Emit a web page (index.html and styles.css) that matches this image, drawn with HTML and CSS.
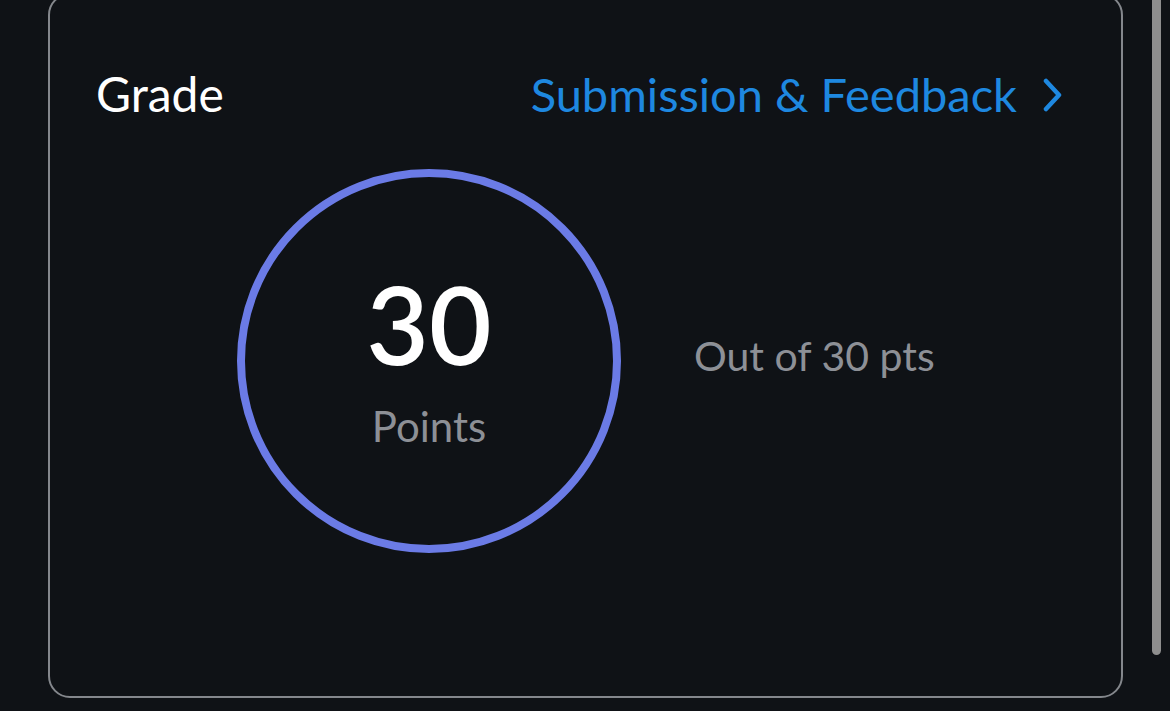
FILE: index.html
```html
<!DOCTYPE html>
<html lang="en">
<head>
<meta charset="utf-8">
<title>Grade</title>
<link rel="stylesheet" href="styles.css">
</head>
<body>
<div class="page">
  <section class="card">
    <header class="card-header">
      <h2 class="title">Grade</h2>
      <a class="link" href="#">Submission &amp; Feedback
        <svg class="chev" width="20" height="34" viewBox="0 0 20 34" aria-hidden="true"><path d="M3 3 L16 17 L3 31" fill="none" stroke="currentColor" stroke-width="4.5" stroke-linecap="round" stroke-linejoin="round"/></svg>
      </a>
    </header>
    <div class="grade-body">
      <div class="ring">
        <div class="score">30</div>
        <div class="unit">Points</div>
      </div>
      <div class="out-of">Out of 30 pts</div>
    </div>
  </section>
  <div class="scrollbar"></div>
</div>
</body>
</html>
```
FILE: styles.css
```css
html, body {
  margin: 0;
  padding: 0;
  background: #0f1216;
  height: 100%;
  overflow: hidden;
}
body {
  font-family: Lato, "Open Sans", sans-serif;
  color: #ffffff;
}
.page {
  position: relative;
  height: 711px;
}
.card {
  position: relative;
  box-sizing: border-box;
  margin-left: 48px;
  margin-top: -7px;
  width: 1075px;
  height: 705px;
  border: 2px solid #84878c;
  border-radius: 22px;
  background: #0f1216;
}
.card-header {
  display: flex;
  align-items: center;
  justify-content: space-between;
  padding: 71px 58px 0 46px;
}
.title {
  margin: 0;
  font-size: 48px;
  font-weight: 400;
  line-height: 56px;
  color: #ffffff;
}
.link {
  display: flex;
  align-items: center;
  gap: 26px;
  font-size: 47px;
  line-height: 56px;
  color: #1e88e0;
  text-decoration: none;
}
.chev {
  display: block;
  margin-top: 2px;
}
.grade-body {
  display: flex;
  align-items: center;
  padding: 47px 0 0 187px;
}
.ring {
  box-sizing: border-box;
  width: 384px;
  height: 384px;
  border: 8px solid #6b7be6;
  border-radius: 50%;
  display: flex;
  flex-direction: column;
  align-items: center;
  justify-content: center;
}
.score {
  font-size: 108px;
  font-weight: 600;
  line-height: 108px;
  margin-top: -7px;
}
.unit {
  font-size: 42px;
  line-height: 42px;
  color: #8d9096;
  margin-top: 28px;
}
.out-of {
  margin-left: 73px;
  font-size: 41px;
  line-height: 41px;
  color: #8d9096;
  margin-top: -12px;
}
.scrollbar {
  position: absolute;
  left: 1152px;
  top: -10px;
  width: 9px;
  height: 672px;
  border-radius: 5px;
  background: #8e8e8e;
}
```
